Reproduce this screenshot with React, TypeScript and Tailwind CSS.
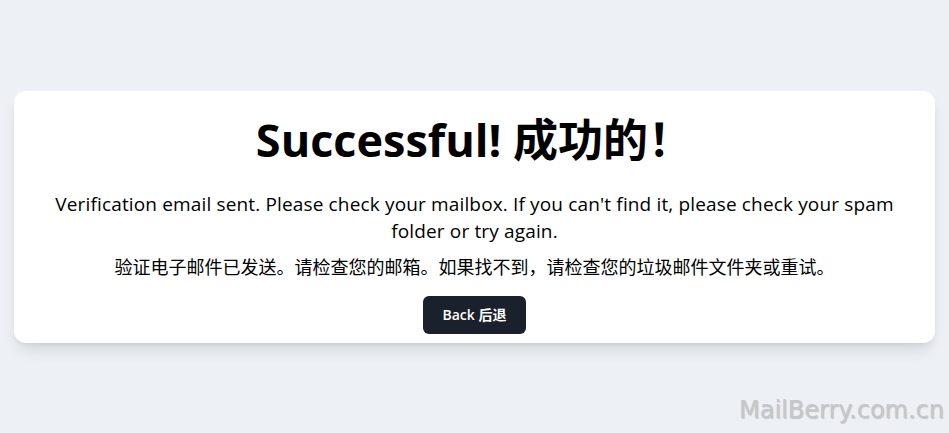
const sans = "font-['Open_Sans','Noto_Sans_CJK_SC',sans-serif]"

export default function App() {
  return (
    <div className={`relative min-h-screen bg-[#edf1f5] flex items-center justify-center ${sans}`}>
      <div className="w-[921px] bg-white rounded-xl shadow-lg px-10 pt-[20px] pb-[9px] flex flex-col items-center text-center">
        <h1 className="text-[45px] leading-[58px] font-bold text-black">Successful! 成功的！</h1>
        <p className="mt-[22px] text-[19px] leading-[27px] tracking-[0.15px] text-black">
          Verification email sent. Please check your mailbox. If you can't find it, please check your spam folder or try again.
        </p>
        <p className="mt-[9px] text-[18px] leading-[26px] text-black">
          验证电子邮件已发送。请检查您的邮箱。如果找不到，请检查您的垃圾邮件文件夹或重试。
        </p>
        <button className="mt-[16px] h-[38px] px-[20px] rounded-md bg-[#1a202c] text-white text-[14px] font-semibold">
          Back 后退
        </button>
      </div>
      <div className="absolute right-[5px] bottom-[5px] text-[24px] font-normal text-[#c4c7ca] font-['DejaVu_Sans',sans-serif] [text-shadow:1px_1px_1px_rgba(0,0,0,0.18)]">
        MailBerry.com.cn
      </div>
    </div>
  )
}
